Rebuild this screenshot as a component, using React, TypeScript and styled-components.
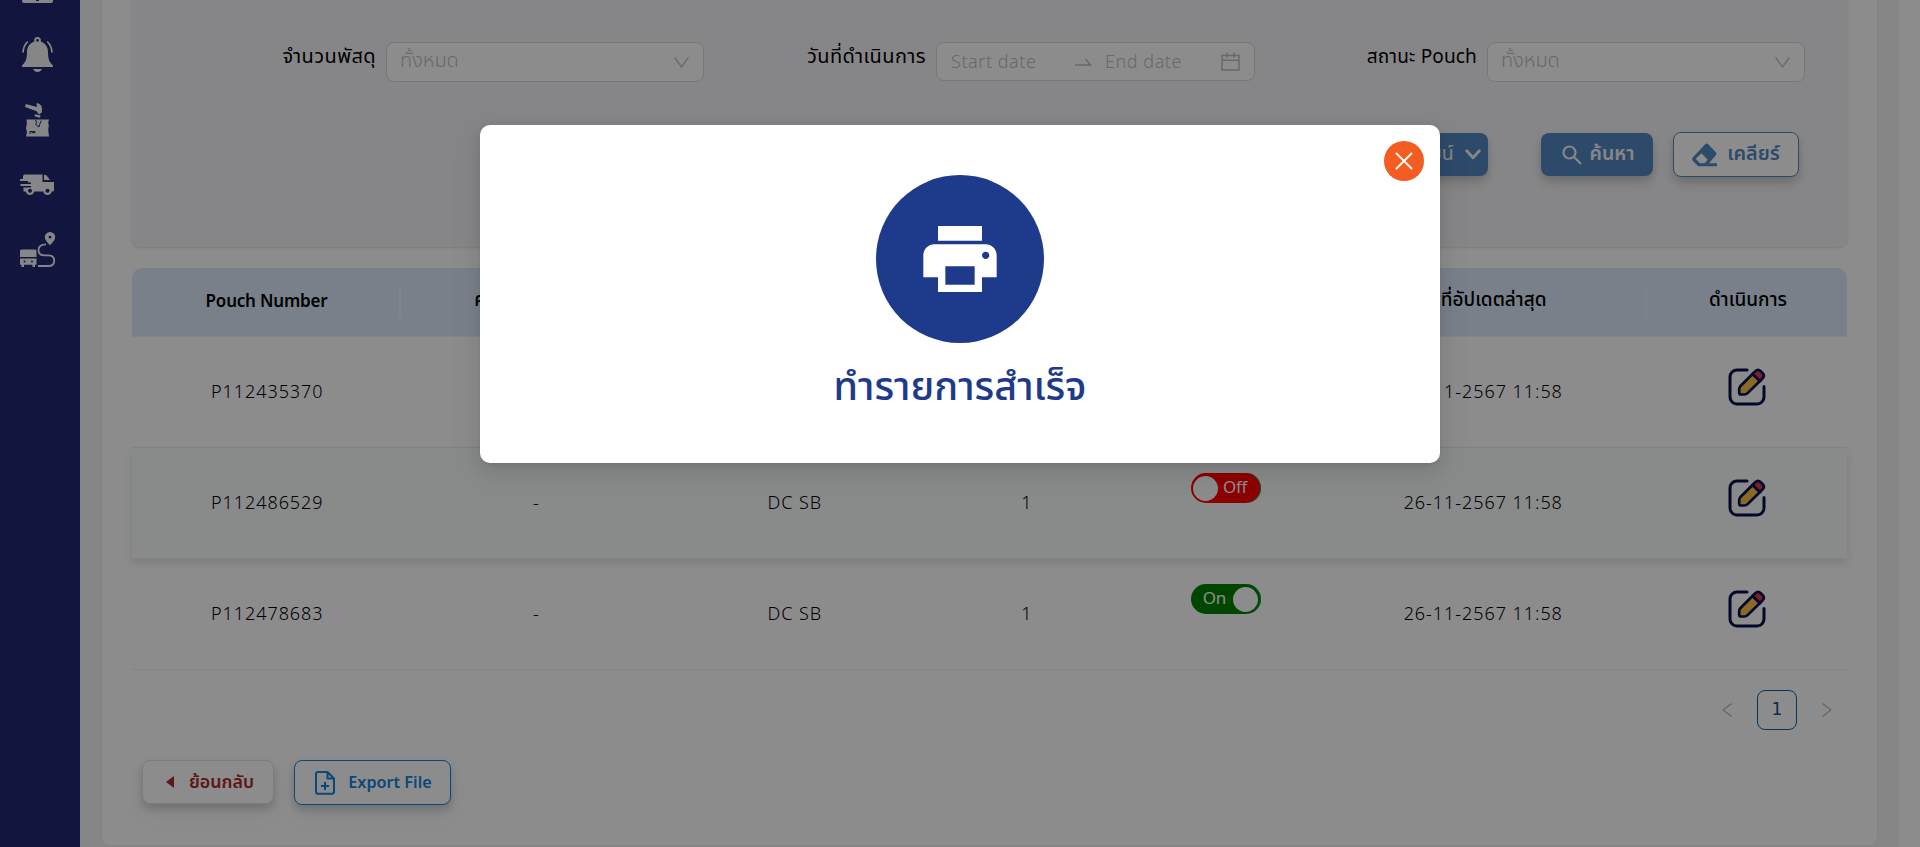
import React from 'react';
import styled, { createGlobalStyle, css } from 'styled-components';

const Global = createGlobalStyle`
  * { box-sizing: border-box; }
  html, body { margin: 0; background: #fff; }
  body { overflow: hidden; font-family: "Noto Sans", "Noto Sans Thai", sans-serif; color: #000; }
  button { font-family: inherit; margin: 0; padding: 0; }
  svg { display: block; flex: none; }
`;

const Page = styled.div`
  position: relative;
  display: flex;
  width: 1920px;
  height: 847px;
  overflow: hidden;
  background: #fff;
`;

const Sidebar = styled.nav`
  width: 80px;
  flex: none;
  background: #21276f;
  color: #f4f5f5;
  display: flex;
  flex-direction: column;
  align-items: center;
  padding-right: 5px;
`;

const SideItem = styled.a<{ $mt?: number }>`
  margin-top: ${(p) => p.$mt ?? 0}px;
`;

const Content = styled.main`
  width: 1819px;
  background: #f5f5f5;
  padding: 0 21px 1px;
  display: flex;
`;

const Card = styled.section`
  flex: 1;
  background: #fff;
  border: 1px solid #f0f0f0;
  border-top: 0;
  border-radius: 0 0 9px 9px;
  padding: 0 29px;
  display: flex;
  flex-direction: column;
`;

const Filters = styled.div`
  height: 247px;
  padding: 42px 43px 0 0;
  background: #f5f5f8;
  border-radius: 0 0 9px 9px;
  box-shadow: 0 1px 2px rgba(0, 0, 0, 0.12);
`;

const FieldRow = styled.div`
  display: grid;
  grid-template-columns: 573px 551px 550px;
  height: 40px;
`;

const Field = styled.div<{ $control: number }>`
  display: grid;
  grid-template-columns: 1fr ${(p) => p.$control}px;
  column-gap: 10px;
`;

const Label = styled.label<{ $size?: number; $ls?: number; $lh?: number }>`
  justify-self: end;
  font-size: ${(p) => p.$size ?? 20}px;
  line-height: ${(p) => p.$lh ?? 27}px;
  white-space: nowrap;
  letter-spacing: ${(p) => p.$ls ?? 0.4}px;
`;

const Control = styled.div<{ $h?: number }>`
  height: ${(p) => p.$h ?? 40}px;
  background: #fff;
  border: 1px solid #d9d9d9;
  border-radius: 8px;
  padding: 0 14px;
  display: flex;
  align-items: center;
  color: #bfbfbf;
`;

const Placeholder = styled.span`
  flex: 1;
  font-size: 20px;
  font-weight: 300;
  white-space: nowrap;
  line-height: 30px;
  padding-bottom: 4px;
  margin-left: -1px;
`;

const DateText = styled.span<{ $w: number }>`
  width: ${(p) => p.$w}px;
  font-size: 18px;
  font-weight: 300;
  letter-spacing: 0.55px;
  white-space: nowrap;
  line-height: 30px;
  padding-bottom: 2px;
`;

const Gap = styled.span<{ $w: number }>`
  width: ${(p) => p.$w}px;
`;

const Actions = styled.div`
  margin-top: 50px;
  padding-right: 6px;
  display: flex;
  align-items: center;
  justify-content: flex-end;
  height: 45px;
`;

type Tone = 'fill' | 'line' | 'danger' | 'export';

const Button = styled.button<{ $tone: Tone; $w: number; $h?: number; $ml?: number; $gap?: number; $pl?: number }>`
  width: ${(p) => p.$w}px;
  height: ${(p) => p.$h ?? 45}px;
  margin-left: ${(p) => p.$ml ?? 0}px;
  padding-left: ${(p) => p.$pl ?? 0}px;
  display: flex;
  align-items: center;
  justify-content: center;
  gap: ${(p) => p.$gap ?? 8}px;
  border-radius: 8px;
  white-space: nowrap;
  box-shadow: 0 5px 8px rgba(0, 0, 0, 0.16), 0 10px 20px rgba(0, 0, 0, 0.05);
  ${(p) => p.$tone === 'fill' && css`background: #5487c3; color: #f5f5f5; border: 0;`}
  ${(p) => p.$tone === 'line' && css`background: #fff; color: #5487c3; border: 1px solid #5487c3;`}
  ${(p) => p.$tone === 'danger' && css`background: #fff; color: #a82a2e; border: 1px solid #e2e2e2;`}
  ${(p) => p.$tone === 'export' && css`background: #fff; color: #1183dc; border: 1px solid #1183dc;`}
`;

const ButtonText = styled.span<{ $size: number; $weight?: number; $pb?: number }>`
  font-size: ${(p) => p.$size}px;
  font-weight: ${(p) => p.$weight ?? 600};
  line-height: 28px;
  padding-bottom: ${(p) => p.$pb ?? 3}px;
`;

const Table = styled.div`
  margin: 21px 0 0 1px;
  width: 1715px;
`;

const cols = css`
  display: grid;
  grid-template-columns: 269px 269px 248px 216px 184px 329px 200px;
`;

const Head = styled.div`
  ${cols}
  height: 69px;
  background: #dce9fb;
  border-bottom: 1px solid #f0f0f0;
  border-radius: 10px 10px 0 0;
  align-items: center;
`;

const HeadCell = styled.div<{ $latin?: boolean }>`
  height: 30px;
  padding: 0 0 ${(p) => (p.$latin ? 4 : 3)}px 2px;
  display: flex;
  align-items: center;
  justify-content: center;
  font-size: ${(p) => (p.$latin ? 17 : 19)}px;
  letter-spacing: ${(p) => (p.$latin ? -0.2 : 0)}px;
  font-weight: ${(p) => (p.$latin ? 600 : 500)};
  white-space: nowrap;
  border-right: ${(p) => (p.$latin ? 2 : 1)}px solid #f0f0f0;
  &:last-child { border-right: 0; }
`;

const Row = styled.div<{ $hover?: boolean }>`
  ${cols}
  height: 111px;
  border-bottom: 1px solid #f0f0f0;
  ${(p) => p.$hover && css`
    position: relative;
    background: #f8fdfa;
    box-shadow: 0 4px 8px rgba(0, 0, 0, 0.11);
  `}
`;

const Cell = styled.div<{ $top?: number }>`
  display: flex;
  justify-content: center;
  align-items: ${(p) => (p.$top ? 'flex-start' : 'center')};
  padding: ${(p) => (p.$top ? `${p.$top}px 0 0` : '0 0 3px 1.5px')};
  font-size: 18px;
  letter-spacing: 0.95px;
  font-weight: 300;
  white-space: nowrap;
`;

const Toggle = styled.span<{ $on?: boolean }>`
  width: 70px;
  height: 30px;
  border-radius: 15px;
  display: flex;
  flex-direction: ${(p) => (p.$on ? 'row-reverse' : 'row')};
  align-items: center;
  padding: 0 ${(p) => (p.$on ? 3 : 2)}px;
  gap: ${(p) => (p.$on ? 7 : 5)}px;
  background: ${(p) => (p.$on ? '#008000' : '#ff0000')};
  box-shadow: inset -1px 0 0 #24a35a;
  color: #fff;
  font-size: 17px;
  font-weight: 400;
  letter-spacing: -0.3px;
`;

const Knob = styled.i`
  width: 25px;
  height: 25px;
  border-radius: 50%;
  background: #fff;
`;

const ToggleText = styled.span`
  line-height: 24px;
  padding-bottom: 3px;
`;

const Pager = styled.div`
  height: 40px;
  margin: 20px 1px 0 0;
  display: flex;
  justify-content: flex-end;
  color: #bfbfbf;
`;

const PageArrow = styled.span`
  width: 40px;
  height: 40px;
  display: grid;
  place-items: center;
`;

const PageNumber = styled.span`
  width: 40px;
  height: 40px;
  margin: 0 10px;
  border: 1px solid #0c61a6;
  border-radius: 8px;
  color: #0c5694;
  display: grid;
  place-items: center;
  padding-bottom: 3px;
  font: 500 17px "DejaVu Sans", sans-serif;
`;

const Footer = styled.div`
  display: flex;
  margin: 30px 0 0 11px;
`;

const Mask = styled.div`
  position: absolute;
  inset: 0;
  background: rgba(0, 0, 0, 0.45);
  display: flex;
  justify-content: center;
  align-items: flex-start;
  padding-top: 125px;
`;

const Modal = styled.div`
  position: relative;
  width: 960px;
  height: 338px;
  background: #fff;
  border-radius: 10px;
  padding-top: 50px;
  display: flex;
  flex-direction: column;
  align-items: center;
  box-shadow: 0 6px 16px rgba(0, 0, 0, 0.08), 0 3px 6px -4px rgba(0, 0, 0, 0.12), 0 9px 28px 8px rgba(0, 0, 0, 0.05);
`;

const Close = styled.button`
  position: absolute;
  top: 16px;
  right: 16px;
  width: 40px;
  height: 40px;
  border: 0;
  border-radius: 50%;
  background: #f45c22;
  display: grid;
  place-items: center;
`;

const Badge = styled.div`
  width: 168px;
  height: 168px;
  border-radius: 50%;
  background: #1e3a8a;
  display: grid;
  place-items: center;
`;

const Title = styled.h1`
  margin: 14px 0 0;
  font-size: 39.5px;
  line-height: 57px;
  font-weight: 550;
  color: #1e3a8a;
  white-space: nowrap;
`;

const Chevron = () => (
  <svg width="15" height="11" viewBox="0 0 15 11" fill="none" stroke="currentColor" strokeWidth="1.300"><path d="M.6.5l6.900 9.300L14.400.5" /></svg>
);

const BoldChevron = () => (
  <svg width="16" height="11" viewBox="0 0 16 11" fill="none" stroke="currentColor" strokeWidth="2.800" strokeLinecap="round" strokeLinejoin="round"><path d="M1.700 1.700L8 8.800l6.300-7.100" /></svg>
);

const ArrowRange = () => (
  <svg width="17" height="8" viewBox="0 0 17 8" fill="none" stroke="currentColor" strokeWidth="1.500"><path d="M0 7h15.500L10.500 1" /></svg>
);

const CalendarIcon = () => (
  <svg width="19" height="19" viewBox="0 0 19 19" fill="none" stroke="currentColor" strokeWidth="1.500"><path d="M1 3.500h17v14.500H1zM1 8.300h17M6 .5v5M13 .5v5" /></svg>
);

const SearchIcon = () => (
  <svg width="20" height="20" viewBox="0 0 20 20" fill="none" stroke="currentColor" strokeWidth="2.200"><circle cx="7.500" cy="7.500" r="6" /><path d="M12 12l7 7" /></svg>
);

const EraserIcon = () => (
  <svg width="25" height="24" viewBox="0 0 25 24" fill="currentColor">
    <path fillRule="evenodd" d="M13.200 1.200q1.500-1.400 3 0l7.600 8q1.400 1.600 0 3L17 20.200h8V23.300H6.200L1 18q-1.700-2 0-3.800zM3.700 15.800l4.200 4.400h4.700l3.100-3.400-6.300-6.600z" />
  </svg>
);

const FileIcon = () => (
  <svg width="20" height="24" viewBox="0 0 20 24" fill="none" stroke="currentColor" strokeWidth="2" strokeLinejoin="round">
    <path d="M12.500 1H3Q1 1 1 3v17.500q0 2.200 2 2.200h14q2 0 2-2.200V7.500zM12.500 1v6.500H19M10 11v8M6 15h8" />
  </svg>
);

const EditIcon = () => (
  <svg width="38" height="38" viewBox="0 0 38 38" fill="none" stroke="#080e50" strokeWidth="3" strokeLinecap="round" strokeLinejoin="round">
    <path d="M19 2H9a7 7 0 0 0-7 7v20a7 7 0 0 0 7 7h20a7 7 0 0 0 7-7V18.500" />
    <g strokeWidth="2.700">
      <path fill="#fbc041" d="M24.500 6L12.500 18q-1.300 1.400-1.300 3.300v3.200q0 2 2 2h3q2 0 3.400-1.400L32 13z" />
      <path fill="#e7384c" d="M24.500 6l3-3q2.600-2.300 5 0l2.200 2.200q2.300 2.500 0 5L32 13z" />
    </g>
  </svg>
);

const BellIcon = () => (
  <svg width="31" height="35" viewBox="0 0 31 35" fill="currentColor">
    <path fillRule="evenodd" d="M15.500 0a3.300 3.300 0 0 1 3.200 4.400C23.500 6 26 10 26 15c0 7 1.500 10.500 5 13.500V30H0v-1.500C3.500 25.500 5 22 5 15 5 10 7.500 6 12.300 4.400A3.300 3.300 0 0 1 15.500 0zm0 1.900a1.400 1.400 0 1 0 0 2.800 1.400 1.400 0 0 0 0-2.800zM11 32h9q-1.500 3-4.500 3T11 32z" />
    <path d="M5.800 4.500Q1.200 9 1 15.500M25.200 4.500Q29.800 9 30 15.500" fill="none" stroke="currentColor" strokeWidth="1.700" />
  </svg>
);

const HammerBoxIcon = () => (
  <svg width="25" height="34" viewBox="0 0 25 34" fill="currentColor">
    <path d="M.8 1L0 4l10.300 3.800q1.700.3 2.200 1.800l1.500 2 2.800-2q.8-4-.5-7.200L13.200.2l-1.900.4.700 3.500z" />
    <path d="M10.200 11.200l5.500 1.300-.8 2.200-5.500-1.500z" />
    <path d="M1.500 16.500H24l-.8 3 .6 3-.6 4 .8 7H1l1-4.500-1-3.500.8-5z" />
    <path d="M10.500 17l1.200 2.500-1 2 3.300 2.500 1-3.500 1.300-3M5 31v-2.500h5v1.200H6.500" fill="none" stroke="#21276f" strokeWidth="1" />
  </svg>
);

const TruckIcon = () => (
  <svg width="35" height="21" viewBox="0 0 35 21" fill="currentColor">
    <path fillRule="evenodd" d="M5 .5h17.500V8H34v8.500q0 1-1 1h-1.300a4.300 4.300 0 0 1-8.400 0H14.200a4.300 4.300 0 0 1-8.400 0H3.500v-4H11v-1.500H.5v-2H11V8.500H8V7H0V5h3V2.500q0-2 2-2zM10 14.700a2 2 0 1 0 0 4 2 2 0 0 0 0-4zm17.500 0a2 2 0 1 0 0 4 2 2 0 0 0 0-4z" />
    <path d="M24 .8q1.800-.2 2.600.8L30 6h-6z" />
  </svg>
);

const RouteIcon = () => (
  <svg width="35" height="35" viewBox="0 0 35 35" fill="currentColor">
    <path fillRule="evenodd" d="M30 0a5.200 5.200 0 0 1 5.200 5.300q0 3-5.200 8-5.200-5-5.200-8A5.200 5.200 0 0 1 30 0zm0 3.800a1.400 1.400 0 1 0 0 2.800 1.400 1.400 0 0 0 0-2.800z" />
    <path fillRule="evenodd" d="M1.500 17.500h13.700q1.300 0 1.300 1.500v6H0v-6q0-1.500 1.500-1.500zM0 26.500h16.500v6.300H15V35h-2.500v-2.200H4V35H1.500v-2.200H0zM4.500 28.600a1 1 0 1 0 0 2 1 1 0 0 0 0-2zm7.500 0a1 1 0 1 0 0 2 1 1 0 0 0 0-2z" />
    <path d="M26 12.300q-7.500 0-7.500 5.700 0 5.300 5.500 5.300h4.500q5.700 0 5.700 5.400 0 5.300-5.700 5.300H18" fill="none" stroke="currentColor" strokeWidth="1.800" />
  </svg>
);

const rows = [
  { id: 'P112435370', count: '', on: true, hover: false },
  { id: 'P112486529', count: '1', on: false, hover: true },
  { id: 'P112478683', count: '1', on: true, hover: false },
];

const heads = ['Pouch Number', 'คลังพัสดุต้นทาง', 'ปลายทาง', 'จำนวนพัสดุ', 'สถานะ', 'วันที่อัปเดตล่าสุด', 'ดำเนินการ'];

export default function App() {
  return (
    <Page>
      <Global />
      <Sidebar>
        <SideItem><svg width="31" height="3"><path d="M0 0h14v1h3V0h14v1q0 2-2 2H2Q0 3 0 1z" fill="currentColor" /></svg></SideItem>
        <SideItem $mt={34}><BellIcon /></SideItem>
        <SideItem $mt={31}><HammerBoxIcon /></SideItem>
        <SideItem $mt={37}><TruckIcon /></SideItem>
        <SideItem $mt={37}><RouteIcon /></SideItem>
      </Sidebar>
      <Content>
        <Card>
          <Filters>
            <FieldRow>
              <Field $control={318}>
                <Label>จำนวนพัสดุ</Label>
                <Control><Placeholder>ทั้งหมด</Placeholder><Chevron /></Control>
              </Field>
              <Field $control={319}>
                <Label>วันที่ดำเนินการ</Label>
                <Control $h={39}>
                  <DateText $w={124}>Start date</DateText>
                  <ArrowRange />
                  <Gap $w={13} />
                  <DateText $w={116}>End date</DateText>
                  <CalendarIcon />
                </Control>
              </Field>
              <Field $control={318}>
                <Label $size={19} $ls={0.15} $lh={29}>สถานะ Pouch</Label>
                <Control><Placeholder>ทั้งหมด</Placeholder><Chevron /></Control>
              </Field>
            </FieldRow>
            <Actions>
              <Button $tone="fill" $w={122} $h={43} $gap={11} $pl={16}>
                <ButtonText $size={19.5} $weight={400}>คอมไบน์</ButtonText><BoldChevron />
              </Button>
              <Button $tone="fill" $w={112} $h={43} $ml={53} $pl={2}>
                <SearchIcon /><ButtonText $size={19.5}>ค้นหา</ButtonText>
              </Button>
              <Button $tone="line" $w={126} $ml={20} $gap={10}>
                <EraserIcon /><ButtonText $size={19.8}>เคลียร์</ButtonText>
              </Button>
            </Actions>
          </Filters>
          <Table>
            <Head>{heads.map((h, i) => <HeadCell key={h} $latin={i === 0}>{h}</HeadCell>)}</Head>
            {rows.map((r) => (
              <Row key={r.id} $hover={r.hover}>
                <Cell>{r.id}</Cell>
                <Cell>-</Cell>
                <Cell>DC SB</Cell>
                <Cell>{r.count}</Cell>
                <Cell $top={25}><Toggle $on={r.on}><Knob /><ToggleText>{r.on ? 'On' : 'Off'}</ToggleText></Toggle></Cell>
                <Cell>26-11-2567 11:58</Cell>
                <Cell $top={31}><EditIcon /></Cell>
              </Row>
            ))}
          </Table>
          <Pager>
            <PageArrow><svg width="10" height="14" viewBox="0 0 10 14" fill="none" stroke="currentColor" strokeWidth="1.400"><path d="M9.500.6L1 7l8.500 6.400" /></svg></PageArrow>
            <PageNumber>1</PageNumber>
            <PageArrow><svg width="10" height="14" viewBox="0 0 10 14" fill="none" stroke="currentColor" strokeWidth="1.400"><path d="M.5.6L9 7 .5 13.400" /></svg></PageArrow>
          </Pager>
          <Footer>
            <Button $tone="danger" $w={132} $h={44} $gap={15} $pl={4}>
              <svg width="8" height="12" viewBox="0 0 8 12"><path d="M8 0v12L0 6z" fill="currentColor" /></svg>
              <ButtonText $size={17.8}>ย้อนกลับ</ButtonText>
            </Button>
            <Button $tone="export" $w={157} $ml={20} $gap={13} $pl={2}>
              <FileIcon /><ButtonText $size={16.2} $pb={1}>Export File</ButtonText>
            </Button>
          </Footer>
        </Card>
      </Content>
      <Mask>
        <Modal>
          <Close><svg width="18" height="18" viewBox="0 0 18 18" stroke="#fff" strokeWidth="1.800"><path d="M1 1l16 16M17 1L1 17" /></svg></Close>
          <Badge><svg width="88" height="88" viewBox="0 0 24 24" fill="#fff"><path d="M19 8H5c-1.660 0-3 1.340-3 3v6h4v4h12v-4h4v-6c0-1.660-1.340-3-3-3zm-3 11H8v-5h8v5zm3-7c-.550 0-1-.450-1-1s.450-1 1-1 1 .450 1 1-.450 1-1 1zm-1-9H6v4h12V3z" /></svg></Badge>
          <Title>ทำรายการสำเร็จ</Title>
        </Modal>
      </Mask>
    </Page>
  );
}
